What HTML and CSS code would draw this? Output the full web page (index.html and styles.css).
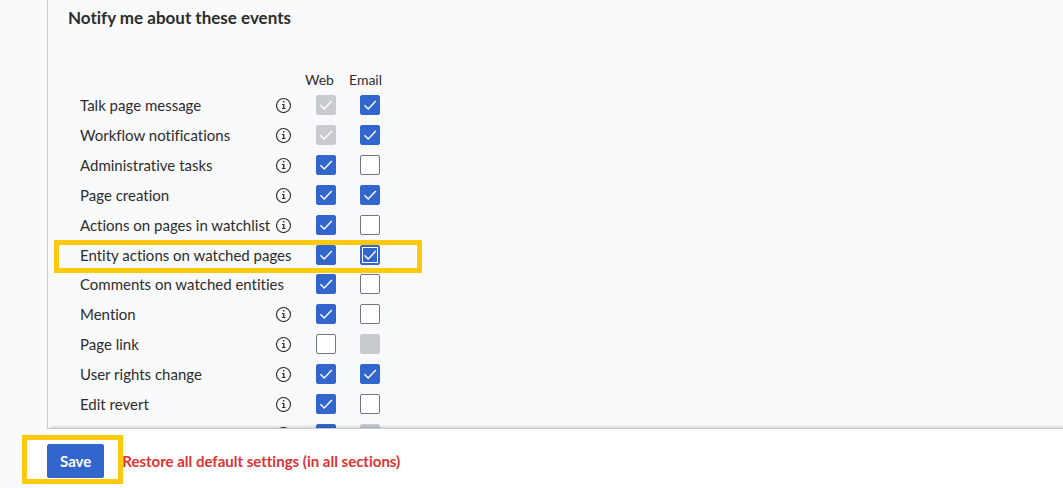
FILE: index.html
```
<!DOCTYPE html>
<html lang="en">
<head>
    <meta charset="UTF-8">
    <meta name="viewport" content="width=device-width, initial-scale=1.0">
    <title>Preferences - Notifications</title>
    <link rel="stylesheet" href="styles.css">
</head>
<body>
    <svg class="sprite" aria-hidden="true">
        <symbol id="info" viewBox="0 0 16 16">
            <circle cx="7.5" cy="8.5" r="7" fill="none" stroke="currentColor" stroke-width="1.1"/>
            <path d="M7 4h1.4v1.5H7zM6 7h2.4v4h1.1v1H6v-1h1.1V8H6z" fill="currentColor"/>
        </symbol>
    </svg>

    <form class="preferences">
        <main class="panel">
            <h2>Notify me about these events</h2>
            <table class="events">
                <thead>
                    <tr><td></td><th scope="col">Web</th><th scope="col">Email</th></tr>
                </thead>
                <tbody id="eventRows"></tbody>
            </table>
        </main>

        <footer class="actions">
            <div class="save-wrap">
                <button class="save" type="submit">Save</button>
            </div>
            <a class="restore" href="#restore">Restore all default settings (in all sections)</a>
        </footer>
    </form>

    <script src="script.js"></script>
</body>
</html>
```

FILE: styles.css
```
* {
    box-sizing: border-box;
}

body {
    margin: 0;
    background-color: #fafafc;
    color: #2c2d2e;
    font-family: Lato, "Open Sans", sans-serif;
    font-size: 15px;
    font-variant-ligatures: none;
    line-height: 20px;
}

.sprite {
    display: none;
}

.preferences {
    display: flex;
    flex-direction: column;
    height: 100vh;
    padding-left: 47px;
}

.panel {
    flex: 1;
    min-height: 0;
    overflow: hidden;
    padding: 8px 20px 0;
    border-left: 1px solid #c8ccd1;
}

h2 {
    margin: 0 0 46px;
    font-size: 17px;
    font-weight: 700;
    line-height: 20px;
}

.events {
    width: 324px;
    table-layout: fixed;
    border-collapse: collapse;
}

.events td,
.events th {
    width: 44px;
    height: 30px;
    padding: 0;
    text-align: center;
}

.events thead td,
.events thead th {
    height: 16px;
    padding: 0 0 4px 1px;
    font-size: 14px;
    font-weight: 400;
    line-height: 12px;
    text-align: left;
}

.events tr td:first-child {
    width: 236px;
    padding: 0 12px;
    text-align: left;
}

.events tbody tr:nth-child(even) {
    background-color: #f8f9fa;
}

.name {
    display: flex;
    align-items: center;
    justify-content: space-between;
    white-space: nowrap;
}

.info {
    width: 16px;
    height: 16px;
}

.events .marked {
    position: relative;
}

.events .marked td {
    height: 29px;
}

.marked::after {
    content: "";
    position: absolute;
    top: 0;
    right: -30px;
    bottom: -4px;
    left: -14px;
    border: 5px solid #ffc90e;
    pointer-events: none;
}

input[type="checkbox"] {
    appearance: none;
    display: block;
    width: 20px;
    height: 20px;
    margin: 0 auto;
    border: 1px solid #72777d;
    border-radius: 2px;
    background: #fff center / 20px 20px no-repeat;
}

input[type="checkbox"]:checked {
    border-color: #36c;
    background-color: #36c;
    background-image: url("data:image/svg+xml,%3Csvg xmlns='http://www.w3.org/2000/svg' viewBox='0 0 20 20'%3E%3Cpath d='M4.5 10.2l3.7 3.9 7.6-8' fill='none' stroke='white' stroke-width='1.4'/%3E%3C/svg%3E");
}

input[type="checkbox"]:disabled {
    border-color: #c8ccd1;
    background-color: #c8ccd1;
}

.marked .current {
    box-shadow: inset 0 0 0 1px #36c, inset 0 0 0 2px #fff;
}

.actions {
    position: relative;
    display: flex;
    align-items: center;
    gap: 18px;
    height: 60px;
    padding-top: 5px;
    border-top: 1px solid #c8ccd1;
    background-color: #fff;
    box-shadow: 3px -1px 3px rgba(0, 0, 0, 0.2);
}

.save-wrap {
    position: relative;
    z-index: 0;
}

.save-wrap::after {
    content: "";
    position: absolute;
    z-index: -1;
    top: -9px;
    right: -19px;
    bottom: -6px;
    left: -25px;
    border: 5px solid #ffc90e;
    background-color: #fff;
    pointer-events: none;
}

.save {
    display: block;
    height: 34px;
    padding: 0 12px;
    border: 1px solid #36c;
    border-radius: 2px;
    background-color: #36c;
    color: #fff;
    font-family: inherit;
    font-size: 15px;
    font-weight: 700;
    cursor: pointer;
}

.save:hover {
    background-color: #447ff5;
}

.restore {
    position: relative;
    color: #d33;
    font-size: 15px;
    font-weight: 700;
    text-decoration: none;
}
```

FILE: script.js
```
// web / email: "on", "off", plus "locked" when the user cannot change it
const events = [
    { name: "Talk page message", info: true, web: "on locked", email: "on" },
    { name: "Workflow notifications", info: true, web: "on locked", email: "on" },
    { name: "Administrative tasks", info: true, web: "on", email: "off" },
    { name: "Page creation", info: true, web: "on", email: "on" },
    { name: "Actions on pages in watchlist", info: true, web: "on", email: "off" },
    { name: "Entity actions on watched pages", info: false, web: "on", email: "on", marked: true },
    { name: "Comments on watched entities", info: false, web: "on", email: "off" },
    { name: "Mention", info: true, web: "on", email: "off" },
    { name: "Page link", info: true, web: "off", email: "off locked" },
    { name: "User rights change", info: true, web: "on", email: "on" },
    { name: "Edit revert", info: true, web: "on", email: "off" },
    { name: "", info: true, web: "on", email: "off locked" },
];

function checkbox(event, type, index) {
    const state = event[type];
    const checked = state.includes("on") ? "checked" : "";
    const disabled = state.includes("locked") ? "disabled" : "";
    const current = event.marked && type === "email" ? "current" : "";
    return `<td><input type="checkbox" class="${current}" name="${type}-${index}"
        aria-labelledby="event-${index}" ${checked} ${disabled}></td>`;
}

document.getElementById("eventRows").innerHTML = events.map((event, index) => `
    <tr class="${event.marked ? "marked" : ""}">
        <td><div class="name">
            <span id="event-${index}">${event.name}</span>
            ${event.info ? '<svg class="info"><use href="#info"/></svg>' : ""}
        </div></td>
        ${checkbox(event, "web", index)}
        ${checkbox(event, "email", index)}
    </tr>
`).join("");
```
